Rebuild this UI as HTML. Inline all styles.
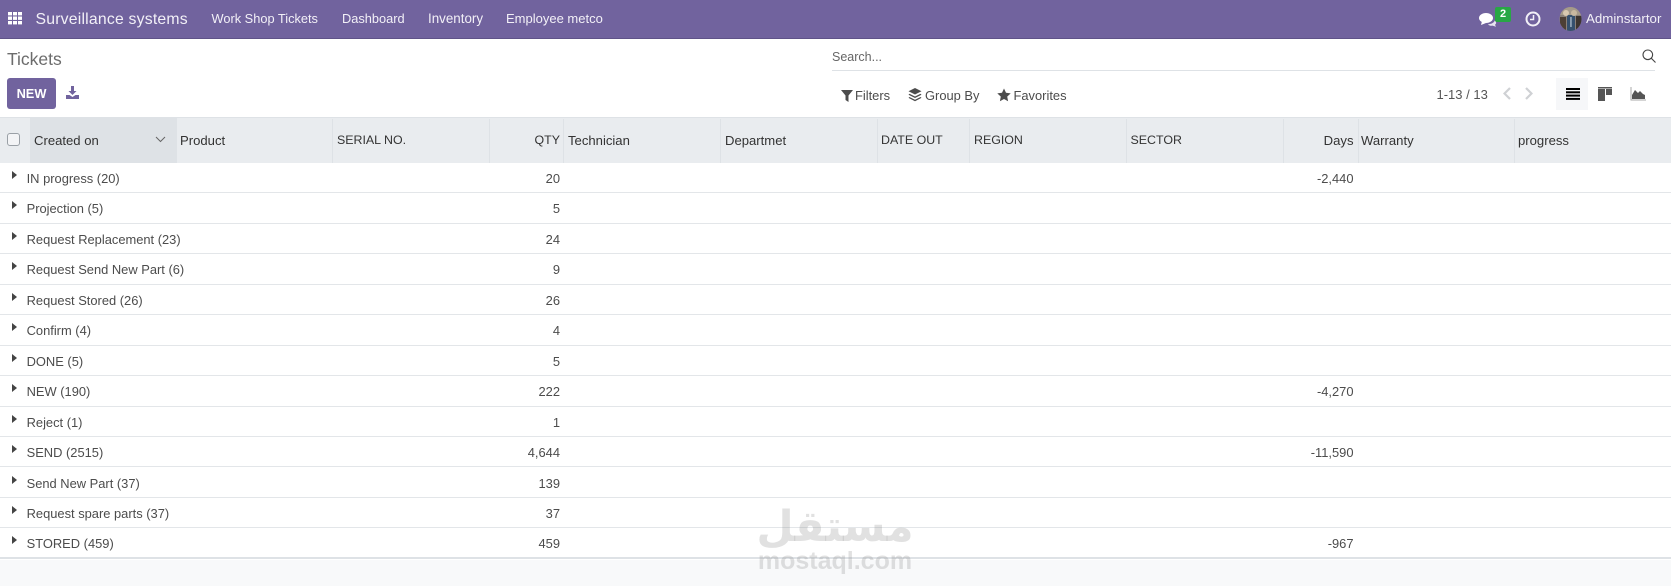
<!DOCTYPE html>
<html><head><meta charset="utf-8"><style>
*{box-sizing:border-box}
html,body{margin:0;padding:0;width:1671px;height:586px;overflow:hidden;background:#fff;font-family:"Liberation Sans",sans-serif;color:#4c4c4c}
.a{position:absolute;white-space:nowrap}
.nav{position:absolute;left:0;top:0;width:1671px;height:39px;background:#71639e;border-bottom:1px solid #5f5388}
.n{position:absolute;top:0;height:38px;line-height:38px;color:#f2f0f7;font-size:12.9px;white-space:nowrap}
.hd{position:absolute;left:0;top:117px;width:1671px;height:46px;background:#e9ecef;border-top:1px solid #dee2e6}
.h{position:absolute;top:0;height:45px;line-height:45px;font-size:13.1px;color:#333;white-space:nowrap}
.h.u{font-size:12.4px}
.s{position:absolute;top:1px;width:1px;height:44px;background:#dee2e6}
.r{position:absolute;left:0;width:1671px;height:30.45px;border-bottom:1px solid #e3e6e9;background:#fff}
.r .t{position:absolute;left:26.6px;top:1px;line-height:30px;font-size:12.9px;white-space:nowrap}
.r .q{position:absolute;right:1111px;top:1px;line-height:30px;font-size:12.9px}
.r .d{position:absolute;right:317.5px;top:1px;line-height:30px;font-size:12.9px}
.r i{position:absolute;left:12px;top:8px;width:0;height:0;border-left:5px solid #444;border-top:4px solid transparent;border-bottom:4px solid transparent}
.c{position:absolute;top:85px;height:22px;line-height:22px;font-size:12.9px;color:#4c4c4c;white-space:nowrap}
</style></head><body>
<div class="nav">
<svg class="a" style="left:8px;top:12px" width="15" height="13" viewBox="0 0 15 13" fill="#fff"><rect x="0" y="0" width="4" height="3.4"/><rect x="5" y="0" width="4" height="3.4"/><rect x="10" y="0" width="4" height="3.4"/><rect x="0" y="4.5" width="4" height="3.4"/><rect x="5" y="4.5" width="4" height="3.4"/><rect x="10" y="4.5" width="4" height="3.4"/><rect x="0" y="9" width="4" height="3.4"/><rect x="5" y="9" width="4" height="3.4"/><rect x="10" y="9" width="4" height="3.4"/></svg>
<div class="n" style="left:35.5px;font-size:15.800px;top:1px;letter-spacing:.2px">Surveillance systems</div>
<div class="n" style="left:211.5px;font-size:12.8px">Work Shop Tickets</div>
<div class="n" style="left:342px;font-size:12.8px">Dashboard</div>
<div class="n" style="left:428px;font-size:13.4px">Inventory</div>
<div class="n" style="left:506px;font-size:13px">Employee metco</div>
<svg class="a" style="left:1479px;top:12px" width="18" height="15" viewBox="0 0 18 15" fill="#fff"><ellipse cx="7" cy="6" rx="7" ry="5"/><path d="M3 9l-1 4 5-2z"/><path d="M9 12.2c3.5 0 6-1.500 6.800-3.700 1.500 1 2 3 .2 4.300l1 2-3.500-1.200c-1.800.4-3.400 0-4.500-1.400z" fill="#e8e5f0"/></svg>
<div class="a" style="left:1495px;top:7px;width:16px;height:15px;background:#28a745;color:#fff;font-size:11px;font-weight:bold;text-align:center;line-height:14px;border-radius:2px">2</div>
<svg class="a" style="left:1525px;top:11px" width="16" height="16" viewBox="0 0 16 16" fill="none" stroke="#f2f0f7" stroke-width="2"><circle cx="8" cy="8" r="6.500"/><path d="M8.500 4v4.500H5" stroke-width="1.500"/></svg>
<svg class="a" style="left:1559px;top:7px" width="23" height="24" viewBox="0 0 23 24"><defs><clipPath id="cp"><ellipse cx="11.500" cy="12" rx="11" ry="12"/></clipPath></defs><g clip-path="url(#cp)"><rect width="23" height="24" fill="#8a8078"/><rect x="0" y="0" width="23" height="8" fill="#a59a8a"/><rect x="8" y="8" width="8" height="16" fill="#35506e"/><rect x="1" y="10" width="6" height="14" fill="#4d3f35"/><rect x="17" y="9" width="6" height="15" fill="#3d3530"/><circle cx="7" cy="6" r="3" fill="#d8c8b0"/><circle cx="15" cy="6" r="3" fill="#c8b8a0"/><rect x="11.200" y="10" width="1.500" height="10" fill="#9fb0c0"/></g></svg>
<div class="n" style="left:1586px;font-size:13.3px">Adminstartor</div>
</div>

<div class="a" style="left:7px;top:47px;font-size:17.500px;line-height:24px;color:#6c6c6c">Tickets</div>
<div class="a" style="left:7px;top:78px;width:49px;height:31px;background:#71639e;border-radius:3px;color:#fff;font-weight:bold;font-size:12.8px;line-height:31px;text-align:center">NEW</div>
<svg class="a" style="left:66px;top:86px" width="13" height="13" viewBox="0 0 13 13" fill="#71639e"><path d="M5 0h3v5h2.500L6.500 9 2.500 5H5z"/><path d="M0 9h3.500l3 2 3-2H13v4H0z"/></svg>

<div class="a" style="left:832px;top:48px;font-size:12.500px;line-height:18px;color:#666">Search...</div>
<div class="a" style="left:832px;top:70px;width:823px;height:1px;background:#dee2e6"></div>
<svg class="a" style="left:1642px;top:49px" width="14" height="14" viewBox="0 0 14 14" fill="none" stroke="#444" stroke-width="1.100"><circle cx="5.800" cy="5.800" r="4.800"/><path d="M9.300 9.300L13.500 13.500"/></svg>

<svg class="a" style="left:841px;top:90px" width="12" height="12" viewBox="0 0 12 12" fill="#4c4c4c"><path d="M0 0h12L7.500 5.500V12L4.500 10V5.500z"/></svg>
<div class="c" style="left:855px">Filters</div>
<svg class="a" style="left:908px;top:88px" width="14" height="14" viewBox="0 0 14 14" fill="#4c4c4c"><path d="M7 0l6.500 3.200L7 6.500.5 3.200z"/><path d="M1.500 5.800L7 8.500l5.500-2.700 1 .9L7 10 .5 6.700z"/><path d="M1.500 9L7 11.700 12.500 9l1 .9L7 13.200.5 9.900z"/></svg>
<div class="c" style="left:925px">Group By</div>
<svg class="a" style="left:997px;top:88px" width="14" height="14" viewBox="0 0 14 14" fill="#4c4c4c"><path d="M7 .5l2 4.300 4.700.6-3.500 3.200.9 4.700L7 11l-4.100 2.300.9-4.700L.3 5.400 5 4.800z"/></svg>
<div class="c" style="left:1013.5px">Favorites</div>

<div class="a" style="left:1436.5px;top:84px;font-size:13px;line-height:22px;color:#555">1-13 / 13</div>
<svg class="a" style="left:1503px;top:87px" width="8" height="13" viewBox="0 0 8 13" fill="none" stroke="#cfd1d4" stroke-width="2.200"><path d="M7 1L1.500 6.500 7 12"/></svg>
<svg class="a" style="left:1525px;top:87px" width="8" height="13" viewBox="0 0 8 13" fill="none" stroke="#cfd1d4" stroke-width="2.200"><path d="M1 1l5.500 5.500L1 12"/></svg>
<div class="a" style="left:1556px;top:78px;width:32px;height:32px;background:#f6f7f9"></div>
<svg class="a" style="left:1566px;top:88px" width="14" height="12" viewBox="0 0 14 12" fill="#000"><rect y="0" width="14" height="2"/><rect y="3.300" width="14" height="2"/><rect y="6.600" width="14" height="2"/><rect y="9.900" width="14" height="2"/></svg>
<svg class="a" style="left:1598px;top:87px" width="14" height="14" viewBox="0 0 14 14" fill="#555"><rect width="14" height="1.500"/><rect y="2" width="7" height="12"/><rect x="8" y="2" width="6" height="6"/></svg>
<svg class="a" style="left:1630px;top:87px" width="16" height="14" viewBox="0 0 16 14"><path d="M1 0v13h15" fill="none" stroke="#aaa" stroke-width="1"/><path d="M2 12V8l3-5 3 3 2-2 3 3 2 1v4z" fill="#555"/></svg>

<div class="hd">
<div class="a" style="left:30px;top:0;width:147px;height:45px;background:#dee2e6"></div>
<div class="a" style="left:7px;top:15px;width:13px;height:13px;border:1px solid #9aa0a6;border-radius:3px;background:#f3f4f6"></div>
<div class="h" style="left:34px">Created on</div>
<svg class="a" style="left:155px;top:18px" width="11" height="7" viewBox="0 0 11 7" fill="none" stroke="#666" stroke-width="1"><path d="M1 1l4.500 4.500L10 1"/></svg>
<div class="h" style="left:180px">Product</div>
<div class="h u" style="left:337px">SERIAL NO.</div>
<div class="h u" style="right:1111px">QTY</div>
<div class="h" style="left:568px">Technician</div>
<div class="h" style="left:725px">Departmet</div>
<div class="h u" style="left:881px">DATE OUT</div>
<div class="h u" style="left:974px">REGION</div>
<div class="h u" style="left:1130.5px">SECTOR</div>
<div class="h" style="right:317.5px">Days</div>
<div class="h" style="left:1361px">Warranty</div>
<div class="h" style="left:1518px">progress</div>
<div class="s" style="left:332px"></div><div class="s" style="left:489px"></div><div class="s" style="left:563px"></div><div class="s" style="left:720px"></div><div class="s" style="left:877px"></div><div class="s" style="left:969px"></div><div class="s" style="left:1126px"></div><div class="s" style="left:1283px"></div><div class="s" style="left:1358px"></div><div class="s" style="left:1514px"></div>
</div>

<div class="r" style="top:163px"><i></i><span class="t">IN progress (20)</span><span class="q">20</span><span class="d">-2,440</span></div>
<div class="r" style="top:193.450px"><i></i><span class="t">Projection (5)</span><span class="q">5</span></div>
<div class="r" style="top:223.900px"><i></i><span class="t">Request Replacement (23)</span><span class="q">24</span></div>
<div class="r" style="top:254.350px"><i></i><span class="t">Request Send New Part (6)</span><span class="q">9</span></div>
<div class="r" style="top:284.800px"><i></i><span class="t">Request Stored (26)</span><span class="q">26</span></div>
<div class="r" style="top:315.250px"><i></i><span class="t">Confirm (4)</span><span class="q">4</span></div>
<div class="r" style="top:345.700px"><i></i><span class="t">DONE (5)</span><span class="q">5</span></div>
<div class="r" style="top:376.150px"><i></i><span class="t">NEW (190)</span><span class="q">222</span><span class="d">-4,270</span></div>
<div class="r" style="top:406.600px"><i></i><span class="t">Reject (1)</span><span class="q">1</span></div>
<div class="r" style="top:437.050px"><i></i><span class="t">SEND (2515)</span><span class="q">4,644</span><span class="d">-11,590</span></div>
<div class="r" style="top:467.500px"><i></i><span class="t">Send New Part (37)</span><span class="q">139</span></div>
<div class="r" style="top:497.950px"><i></i><span class="t">Request spare parts (37)</span><span class="q">37</span></div>
<div class="r" style="top:528.400px;border-bottom:2px solid #dee2e6"><i></i><span class="t">STORED (459)</span><span class="q">459</span><span class="d">-967</span></div>
<div class="a" style="left:0;top:560px;width:1671px;height:26px;background:#f8f9fa"></div>

<div class="a" style="left:735px;top:497px;width:200px;text-align:center;font-family:'DejaVu Sans',sans-serif;font-weight:bold;font-size:43px;line-height:60px;color:rgba(130,130,130,.24)">مستقل</div>
<div class="a" style="left:735px;top:547px;width:200px;text-align:center;font-family:'Liberation Sans',sans-serif;font-weight:bold;font-size:25px;line-height:28px;color:rgba(130,130,130,.24)">mostaql.com</div>
</body></html>
